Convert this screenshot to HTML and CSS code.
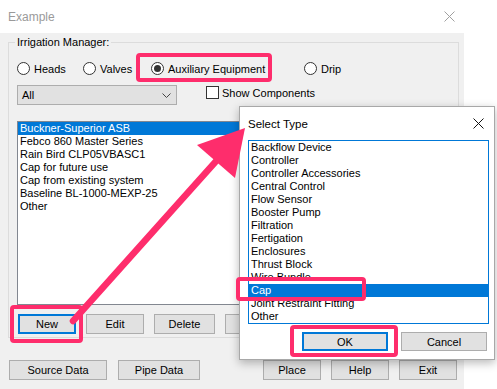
FILE: index.html
```html
<!DOCTYPE html>
<html lang="en">
<head>
  <meta charset="UTF-8" />
  <title>Example</title>
  <link rel="stylesheet" href="styles.css">
</head>
<body>
  <div class="window">
    <div class="titlebar">
      <span class="title">Example</span>
      <svg class="close" width="11" height="11" viewBox="0 0 11 11"><path d="M0.5 0.5L10.5 10.5M10.5 0.5L0.5 10.5" stroke="#a0a0a0" stroke-width="1"/></svg>
    </div>
    <div class="content">
      <div class="group">
        <span class="legend">Irrigation Manager:</span>
        <div class="radios">
          <label class="radio"><span class="dot"></span>Heads</label>
          <label class="radio"><span class="dot"></span>Valves</label>
          <label class="radio"><span class="dot checked"></span>Auxiliary Equipment</label>
          <label class="radio"><span class="dot"></span>Drip</label>
        </div>
        <div class="filters">
          <div class="combo">
            <span>All</span>
            <svg width="9" height="5" viewBox="0 0 9 5"><path d="M0.5 0.5L4.5 4.5L8.5 0.5" fill="none" stroke="#444" stroke-width="1"/></svg>
          </div>
          <label class="check"><span class="box"></span>Show Components</label>
        </div>
        <ul class="list">
          <li class="selected">Buckner-Superior ASB</li>
          <li>Febco 860 Master Series</li>
          <li>Rain Bird CLP05VBASC1</li>
          <li>Cap for future use</li>
          <li>Cap from existing system</li>
          <li>Baseline BL-1000-MEXP-25</li>
          <li>Other</li>
        </ul>
        <div class="actions">
          <button class="btn focus btn-new">New</button>
          <button class="btn btn-edit">Edit</button>
          <button class="btn btn-delete">Delete</button>
          <button class="btn btn-edit"></button>
        </div>
      </div>
      <div class="footer">
        <button class="btn btn-source">Source Data</button>
        <button class="btn btn-pipe">Pipe Data</button>
        <button class="btn btn-small push">Place</button>
        <button class="btn btn-small">Help</button>
        <button class="btn btn-small">Exit</button>
      </div>
    </div>
  </div>

  <div class="dialog">
    <div class="dlg-title">
      <span>Select Type</span>
      <svg width="11" height="11" viewBox="0 0 11 11"><path d="M0.5 0.5L10.5 10.5M10.5 0.5L0.5 10.5" stroke="#111" stroke-width="1"/></svg>
    </div>
    <ul class="list dlg-list">
      <li>Backflow Device</li>
      <li>Controller</li>
      <li>Controller Accessories</li>
      <li>Central Control</li>
      <li>Flow Sensor</li>
      <li>Booster Pump</li>
      <li>Filtration</li>
      <li>Fertigation</li>
      <li>Enclosures</li>
      <li>Thrust Block</li>
      <li>Wire Bundle</li>
      <li class="selected">Cap</li>
      <li>Joint Restraint Fitting</li>
      <li>Other</li>
    </ul>
    <div class="dlg-buttons">
      <button class="btn focus btn-dlg">OK</button>
      <button class="btn btn-dlg">Cancel</button>
    </div>
  </div>

  <div class="mark mark-aux"></div>
  <div class="mark mark-new"></div>
  <div class="mark mark-cap"></div>
  <div class="mark mark-ok"></div>

  <svg class="arrow" width="497" height="389" viewBox="0 0 497 389">
    <line x1="73" y1="321" x2="218" y2="159" stroke="#fe2d6c" stroke-width="6.5" stroke-linecap="round"/>
    <polygon points="245,128 197,145 235,178" fill="#fe2d6c"/>
  </svg>
</body>
</html>
```

FILE: styles.css
```css
body {
  margin: 0;
  background: #ffffff;
  font-family: "Liberation Sans", Arial, sans-serif;
  font-size: 11px;
  color: #000000;
  position: relative;
  width: 497px;
  height: 389px;
  overflow: hidden;
}
.window {
  width: 464px;
  height: 389px;
  background: #f0f0f0;
}
.titlebar {
  height: 33px;
  background: #ffffff;
  display: flex;
  align-items: center;
  justify-content: space-between;
  padding: 0 9px 0 8px;
}
.title {
  font-size: 12px;
  color: #9a9a9a;
}
.content {
  padding: 9px 5px 0 8px;
}
.group {
  position: relative;
  box-sizing: border-box;
  height: 296px;
  border: 1px solid #dcdcdc;
  padding: 0 8px;
}
.legend {
  position: absolute;
  top: -7px;
  left: 6px;
  padding: 0 2px;
  background: #f0f0f0;
}
.radios {
  display: grid;
  grid-template-columns: 66px 68px 153px auto;
  align-items: center;
  margin-top: 19px;
  height: 13px;
}
.radio, .check {
  display: flex;
  align-items: center;
}
.dot {
  box-sizing: border-box;
  width: 13px;
  height: 13px;
  border: 1px solid #333333;
  border-radius: 50%;
  background: #ffffff;
  margin-right: 4px;
  display: flex;
  align-items: center;
  justify-content: center;
}
.dot.checked::after {
  content: "";
  width: 7px;
  height: 7px;
  border-radius: 50%;
  background: #333333;
}
.filters {
  display: flex;
  margin-top: 10px;
}
.combo {
  box-sizing: border-box;
  width: 160px;
  height: 20px;
  background: #e1e1e1;
  border: 1px solid #adadad;
  display: flex;
  align-items: center;
  justify-content: space-between;
  padding: 0 5px 0 4px;
}
.check {
  margin-left: 29px;
  align-self: flex-start;
  margin-top: 1px;
}
.box {
  box-sizing: border-box;
  width: 13px;
  height: 13px;
  border: 1px solid #333333;
  background: #ffffff;
  margin-right: 3px;
}
.list {
  list-style: none;
  margin: 16px 0 0;
  padding: 0;
  box-sizing: border-box;
  width: 432px;
  height: 184px;
  background: #ffffff;
  border: 1px solid #828790;
}
.list li {
  height: 13px;
  line-height: 13px;
  padding-left: 2px;
  white-space: nowrap;
}
.list li.selected {
  background: #0078d7;
  color: #ffffff;
}
.actions {
  display: flex;
  gap: 10px;
  margin: 9px 0 0 1px;
}
.btn {
  box-sizing: border-box;
  height: 20px;
  padding: 0;
  background: #e1e1e1;
  border: 1px solid #adadad;
  font-family: inherit;
  font-size: 11px;
  color: #000000;
}
.btn.focus {
  border-color: #0078d7;
  box-shadow: inset 0 0 0 1px #0078d7;
}
.btn-new { width: 58px; }
.btn-edit { width: 58px; }
.btn-delete { width: 61px; }
.btn-source { width: 98px; }
.btn-pipe { width: 82px; }
.btn-small { width: 58px; }
.footer {
  display: flex;
  gap: 10px;
  margin: 22px 2px 0 1px;
}
.footer .btn-pipe { margin-left: 1px; }
.push { margin-left: auto; }

.dialog {
  position: absolute;
  left: 239px;
  top: 106px;
  box-sizing: border-box;
  width: 256px;
  height: 254px;
  background: #ffffff;
  border: 1px solid #a8a8a8;
  box-shadow: 0 3px 9px rgba(0,0,0,0.28);
}
.dlg-title {
  height: 33px;
  display: flex;
  align-items: center;
  justify-content: space-between;
  padding: 0 10px 0 8px;
  font-size: 11.5px;
}
.dlg-list {
  margin: 0 0 0 8px;
  width: 241px;
  border-color: #0078d7;
}
.dlg-buttons {
  display: flex;
  justify-content: flex-end;
  gap: 13px;
  margin-top: 8px;
  padding-right: 7px;
}
.btn-dlg {
  width: 86px;
  height: 19px;
}

.mark {
  position: absolute;
  box-sizing: border-box;
  border: 4px solid #fe2d6c;
  border-radius: 4px;
}
.mark-aux { left: 136px; top: 53px; width: 136px; height: 29px; }
.mark-new { left: 10px; top: 305px; width: 73px; height: 38px; }
.mark-cap { left: 236px; top: 277px; width: 130px; height: 24px; }
.mark-ok { left: 290px; top: 325px; width: 108px; height: 32px; }
.arrow {
  position: absolute;
  left: 0;
  top: 0;
  pointer-events: none;
}
```
